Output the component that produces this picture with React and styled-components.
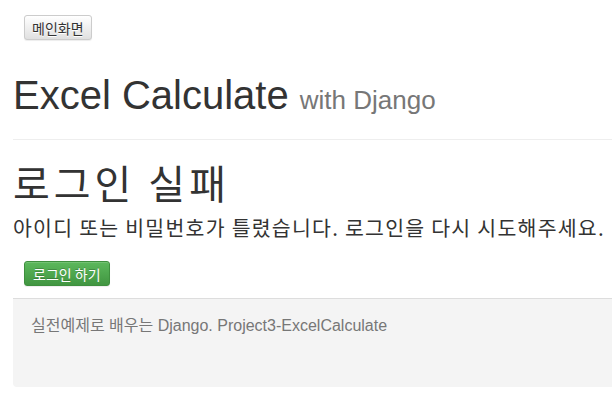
import React from 'react';
import styled, { createGlobalStyle } from 'styled-components';

const GlobalStyle = createGlobalStyle`
  html, body {
    margin: 0;
    padding: 0;
    background: #fff;
  }
  body {
    font-family: "Liberation Sans", Arial, "Noto Sans CJK KR", sans-serif;
    color: #333;
    overflow: hidden;
  }
`;

const Page = styled.div`
  width: 612px;
  height: 414px;
  overflow: hidden;
`;

const Container = styled.div`
  padding-left: 13px;
`;

const ButtonRow = styled.div`
  padding-left: 24px;
  display: flex;
`;

const Btn = styled.button`
  display: inline-flex;
  align-items: center;
  justify-content: center;
  box-sizing: border-box;
  height: 25px;
  padding: 0 ${(p) => p.$pad}px;
  font-family: "Noto Sans CJK KR", sans-serif;
  font-size: ${(p) => p.$size}px;
  letter-spacing: ${(p) => p.$spacing}px;
  line-height: 1;
  border-radius: 3px;
  border: 1px solid;
  cursor: pointer;
  ${(p) =>
    p.$variant === 'success'
      ? `
    color: #fff;
    background-image: linear-gradient(to bottom, #5cb85c 0, #419641 100%);
    border-color: #3e8f3e;
    text-shadow: 0 -1px 0 rgba(0,0,0,.2);
    box-shadow: inset 0 1px 0 rgba(255,255,255,.15), 0 1px 1px rgba(0,0,0,.075);
  `
      : `
    color: #333;
    background-image: linear-gradient(to bottom, #fff 0, #e0e0e0 100%);
    border-color: #ccc;
    text-shadow: 0 1px 0 #fff;
    box-shadow: inset 0 1px 0 rgba(255,255,255,.15), 0 1px 1px rgba(0,0,0,.075);
  `}
`;

const TopBar = styled.div`
  padding-top: 15px;
`;

const PageHeader = styled.div`
  margin-top: 33px;
  border-bottom: 1px solid #eee;
  padding-bottom: 17px;
`;

const Title = styled.h1`
  margin: 0;
  font-size: 40px;
  font-weight: 400;
  line-height: 44px;
  color: #333;
  small {
    font-size: 26px;
    color: #777;
    font-weight: 400;
  }
`;

const FailTitle = styled.h1`
  margin: 20px 0 0;
  font-family: "Noto Sans CJK KR", sans-serif;
  font-size: 40px;
  letter-spacing: 4px;
  font-weight: 400;
  line-height: 44px;
  color: #333;
`;

const Lead = styled.p`
  margin: 9px 0 0;
  font-family: "Noto Sans CJK KR", sans-serif;
  font-size: 20.5px;
  letter-spacing: 1.25px;
  line-height: 28px;
  color: #333;
  white-space: nowrap;
`;

const Actions = styled(ButtonRow)`
  margin-top: 20px;
`;

const Footer = styled.footer`
  margin-top: 12px;
  height: 89px;
  box-sizing: border-box;
  background: #f4f4f4;
  border-top: 1px solid #ddd;
  border-bottom-left-radius: 4px;
  padding: 13px 0 0 18px;
  font-size: 16px;
  color: #777;
`;

export default function App() {
  return (
    <Page>
      <GlobalStyle />
      <TopBar>
        <ButtonRow>
          <Btn $pad={7} $size={14} $spacing={0}>메인화면</Btn>
        </ButtonRow>
      </TopBar>
      <Container>
        <PageHeader>
          <Title>
            Excel Calculate <small>with Django</small>
          </Title>
        </PageHeader>
        <FailTitle>로그인 실패</FailTitle>
        <Lead>아이디 또는 비밀번호가 틀렸습니다. 로그인을 다시 시도해주세요.</Lead>
      </Container>
      <Actions>
        <Btn $variant="success" $pad={8} $size={14} $spacing={0}>로그인 하기</Btn>
      </Actions>
      <Container>
        <Footer>실전예제로 배우는 Django. Project3-ExcelCalculate</Footer>
      </Container>
    </Page>
  );
}
